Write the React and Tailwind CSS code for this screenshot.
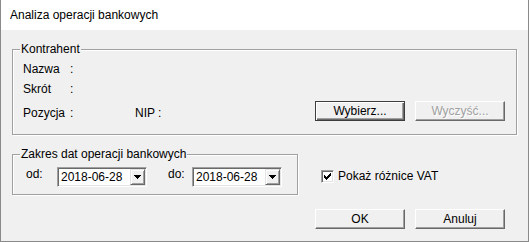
import React from "react";

function Group({ title, className = "", children }) {
  return (
    <div
      className={`relative border border-[#a0a0a0] shadow-[inset_1px_1px_0_#ffffff,1px_1px_0_#ffffff] ${className}`}
    >
      <span className="absolute left-[7px] top-[-9px] bg-[#f0f0f0] px-[1px] leading-[16px] whitespace-nowrap">
        {title}
      </span>
      {children}
    </div>
  );
}

function Btn({ children, def = false, disabled = false }) {
  const base =
    "w-[90px] h-[20px] flex items-center justify-center leading-[16px] bg-[#f0f0f0]";
  if (def) {
    return (
      <div
        className={`${base} border border-[#3c3c3c] shadow-[inset_1px_1px_0_#ffffff,inset_-1px_-1px_0_#696969,inset_-2px_-2px_0_#a0a0a0]`}
      >
        {children}
      </div>
    );
  }
  return (
    <div
      className={`${base} border-t border-l border-t-white border-l-white border-b border-r border-b-[#696969] border-r-[#696969] shadow-[inset_-1px_-1px_0_#a0a0a0] ${
        disabled ? "text-[#a0a0a0] [text-shadow:1px_1px_0_#ffffff]" : ""
      }`}
    >
      {children}
    </div>
  );
}

function DatePick({ value }) {
  return (
    <div className="w-[90px] h-[20px] flex bg-white border-t border-l border-t-[#a0a0a0] border-l-[#a0a0a0] border-b border-r border-b-white border-r-white shadow-[inset_1px_1px_0_#696969,inset_-1px_-1px_0_#e3e3e3] p-[1px]">
      <div className="flex-1 pl-[2px] leading-[16px] h-[16px]">{value}</div>
      <div className="w-[15px] h-[16px] flex items-center justify-center bg-[#f0f0f0] border-t border-l border-t-[#e3e3e3] border-l-[#e3e3e3] border-b border-r border-b-[#696969] border-r-[#696969] shadow-[inset_1px_1px_0_#ffffff,inset_-1px_-1px_0_#a0a0a0]">
        <svg width="7" height="4" viewBox="0 0 7 4" shapeRendering="crispEdges">
          <rect x="0" y="0" width="7" height="1" fill="#000" />
          <rect x="1" y="1" width="5" height="1" fill="#000" />
          <rect x="2" y="2" width="3" height="1" fill="#000" />
          <rect x="3" y="3" width="1" height="1" fill="#000" />
        </svg>
      </div>
    </div>
  );
}

function Check() {
  return (
    <div className="w-[13px] h-[13px] flex items-center justify-center bg-white border-t border-l border-t-[#a0a0a0] border-l-[#a0a0a0] border-b border-r border-b-white border-r-white shadow-[inset_1px_1px_0_#696969,inset_-1px_-1px_0_#e3e3e3]">
      <svg width="7" height="7" viewBox="0 0 7 7" shapeRendering="crispEdges">
        <rect x="6" y="0" width="1" height="1" fill="#000" />
        <rect x="5" y="1" width="2" height="1" fill="#000" />
        <rect x="0" y="2" width="1" height="1" fill="#000" />
        <rect x="4" y="2" width="3" height="1" fill="#000" />
        <rect x="0" y="3" width="2" height="1" fill="#000" />
        <rect x="3" y="3" width="3" height="1" fill="#000" />
        <rect x="0" y="4" width="5" height="1" fill="#000" />
        <rect x="1" y="5" width="3" height="1" fill="#000" />
        <rect x="2" y="6" width="1" height="1" fill="#000" />
      </svg>
    </div>
  );
}

export default function App() {
  return (
    <div className="w-[529px] h-[242px] flex flex-col bg-[#f0f0f0] border-x border-b border-[#8a8a8a] text-[12px] text-black font-['Liberation_Sans',Arial,sans-serif]">
      <div className="h-[30px] shrink-0 bg-white flex items-center pl-[9px] leading-[16px]">
        Analiza operacji bankowych
      </div>
      <div className="flex flex-col px-[11px]">
        <Group title="Kontrahent" className="mt-[19px] flex flex-col gap-[4px] pt-[11px] pb-[13px] pl-[10px] pr-[11px]">
          <div className="flex leading-[16px] h-[16px]">
            <span className="w-[47px]">Nazwa</span>
            <span>:</span>
          </div>
          <div className="flex leading-[16px] h-[16px]">
            <span className="w-[47px]">Skrót</span>
            <span>:</span>
          </div>
          <div className="flex items-end">
            <span className="w-[47px] leading-[16px]">Pozycja</span>
            <span className="w-[65px] leading-[16px]">:</span>
            <span className="leading-[16px]">NIP :</span>
            <div className="ml-auto flex gap-[10px]">
              <Btn def>Wybierz...</Btn>
              <Btn disabled>Wyczyść...</Btn>
            </div>
          </div>
        </Group>
        <div className="flex mt-[19px]">
          <Group title="Zakres dat operacji bankowych" className="w-[286px] pt-[11px] pb-[7px] pl-[13px]">
            <div className="flex items-start">
              <span className="w-[31px] leading-[16px]">od:</span>
              <div className="mt-[1px]">
                <DatePick value="2018-06-28" />
              </div>
              <span className="ml-[21px] w-[24px] leading-[16px]">do:</span>
              <div className="mt-[1px]">
                <DatePick value="2018-06-28" />
              </div>
            </div>
          </Group>
          <div className="ml-[23px] mt-[14px] h-[16px] flex items-center gap-[4px] self-start">
            <Check />
            <span className="leading-[16px]">Pokaż różnice VAT</span>
          </div>
        </div>
        <div className="mt-[14px] flex justify-end gap-[10px] pr-[12px]">
          <Btn>OK</Btn>
          <Btn>Anuluj</Btn>
        </div>
      </div>
    </div>
  );
}
